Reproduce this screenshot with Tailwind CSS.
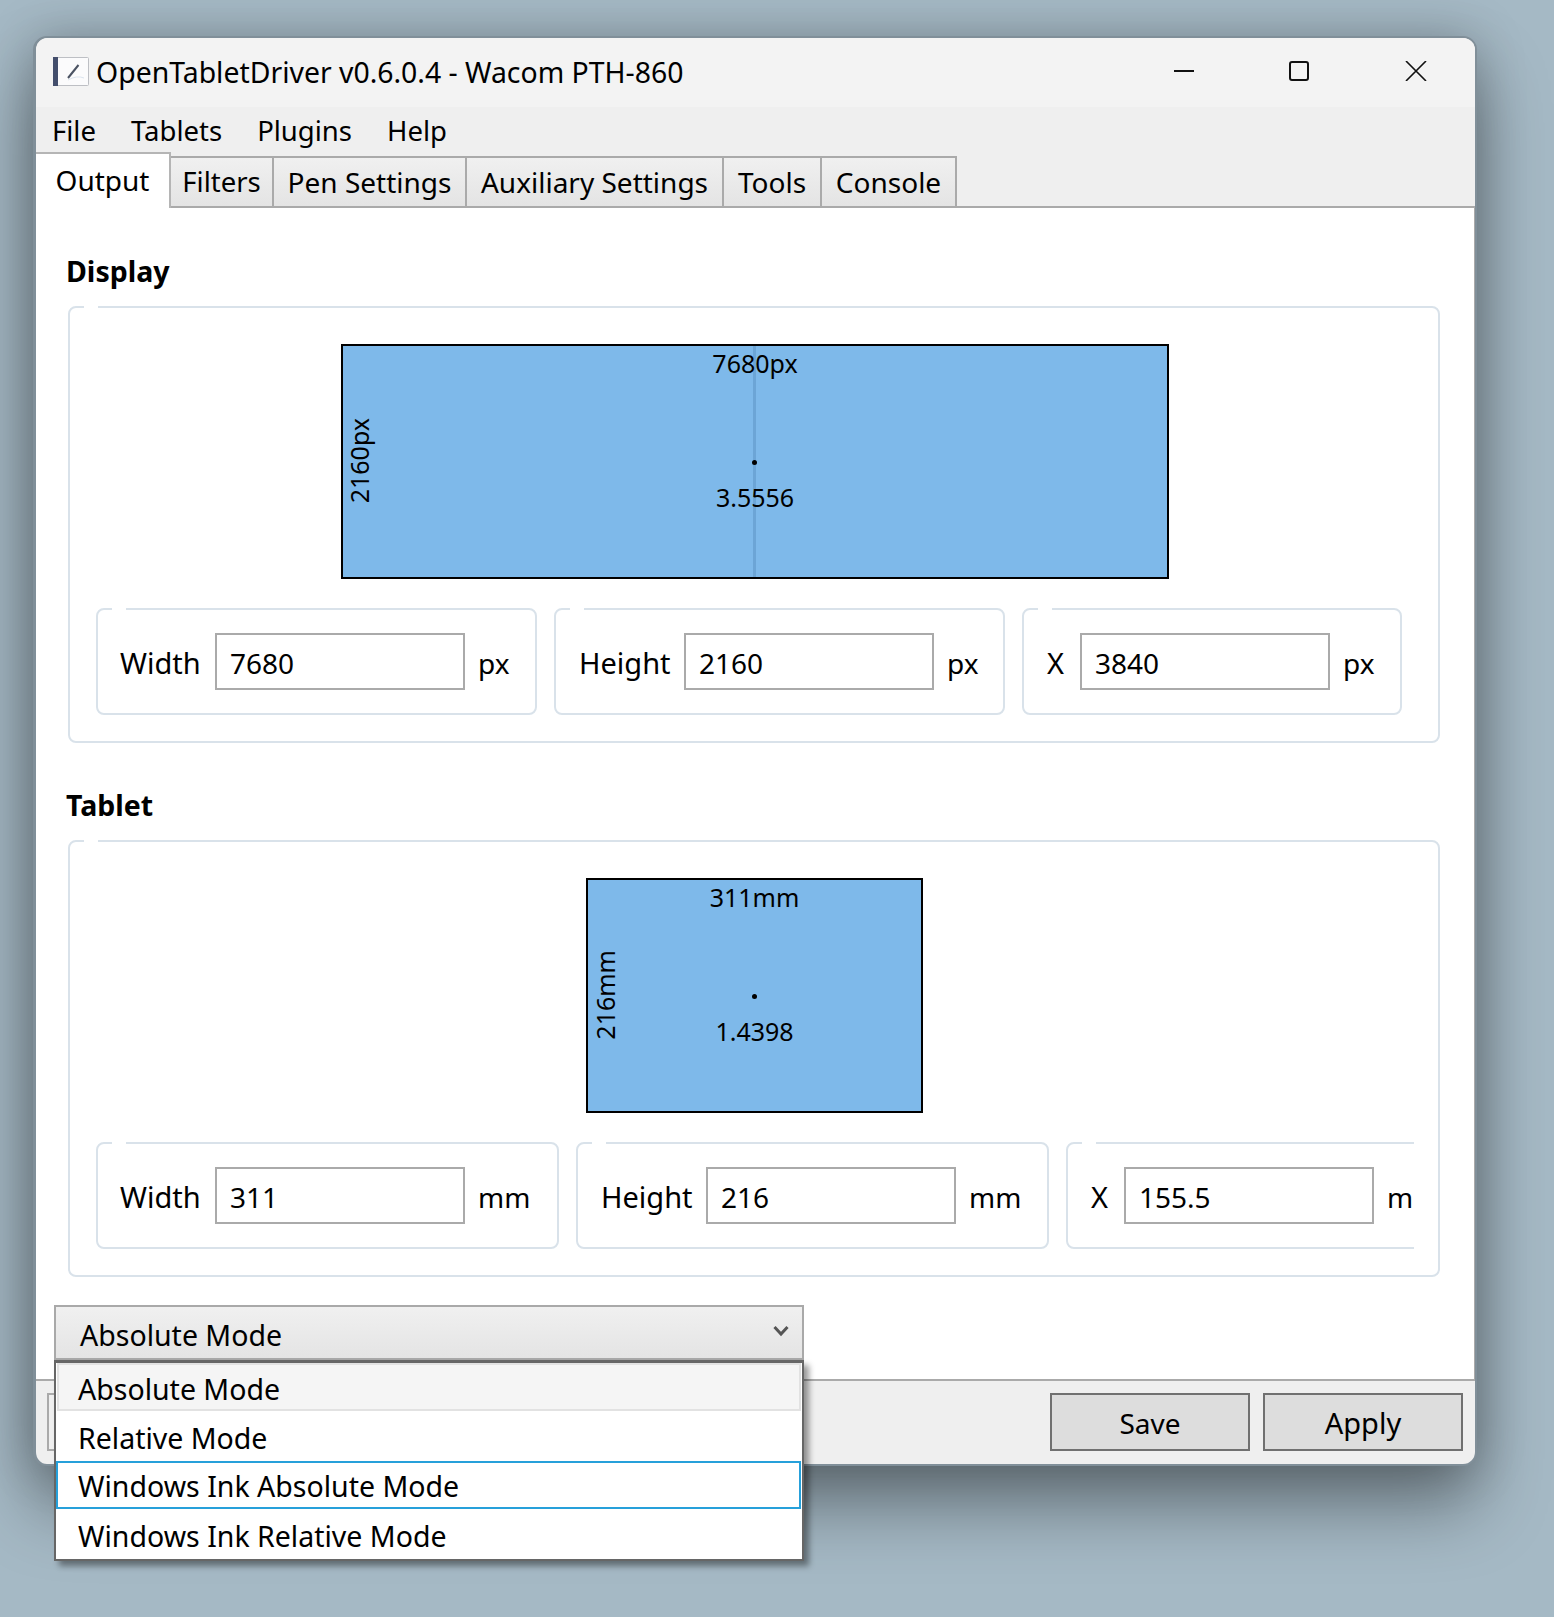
<!DOCTYPE html>
<html lang="en">
<head>
  <meta charset="UTF-8" />
  <title>OpenTabletDriver v0.6.0.4 - Wacom PTH-860</title>
  <script src="https://cdn.jsdelivr.net/npm/@tailwindcss/browser@4"></script>
</head>
<body class="w-[1554px] h-[1617px] overflow-hidden bg-[#a5b9c5] pt-[36px] pl-[33px] font-['Noto_Sans',sans-serif] text-[28px] text-black">
  <div class="w-[1444px] h-[1430px] flex flex-col border-2 border-l-[3px] border-[#808f99] rounded-[14px] bg-[#efefef] shadow-[0_0_50px_rgba(0,0,0,0.22),0_40px_70px_rgba(0,0,0,0.38)]">

    <!-- title bar -->
    <div class="h-[69px] shrink-0 flex items-center bg-[#f3f3f3] rounded-t-[12px] pl-[17px]">
      <svg class="w-[36px] h-[29px] mr-[7px] mb-[3px]" viewBox="0 0 36 29">
        <rect x="0.5" y="0.5" width="35" height="28" rx="1" fill="#fbfbfc" stroke="#bdbfc4" />
        <rect x="0" y="0" width="5" height="29" fill="#434e6c" />
        <path d="M15 21 L25.5 8" stroke="#4a5262" stroke-width="2" />
        <path d="M15 23 Q24 18 31 21" stroke="#dbe4ee" stroke-width="1" fill="none" />
      </svg>
      <span class="w-[1069px] text-[28.4px]">OpenTabletDriver v0.6.0.4 - Wacom PTH-860</span>
      <svg class="w-[20px] h-[20px] ml-[9px] mb-[3px]" viewBox="0 0 20 20"><path d="M0 10 H20" stroke="#111" stroke-width="2" /></svg>
      <svg class="w-[20px] h-[20px] ml-[95px] mb-[3px]" viewBox="0 0 20 20"><rect x="1" y="1" width="18" height="18" rx="2" fill="none" stroke="#111" stroke-width="2" /></svg>
      <svg class="w-[22px] h-[20px] ml-[96px] mb-[3px]" viewBox="0 0 22 20"><path d="M1 0 L21 20 M21 0 L1 20" stroke="#111" stroke-width="1.6" /></svg>
    </div>

    <!-- menu -->
    <div class="h-[45px] shrink-0 flex items-center gap-[35px] pl-[16px] pt-[2px] text-[27.5px] leading-[45px]">
      <span>File</span><span>Tablets</span><span>Plugins</span><span>Help</span>
    </div>

    <!-- tabs -->
    <div class="h-[56px] shrink-0 flex items-end border-b-2 border-[#aaaaaa]">
      <div class="relative z-10 w-[135px] h-[56px] -mb-[2px] flex items-center justify-center pb-[3px] bg-white border-t-2 border-r-2 border-[#b5b5b5]">Output</div>
      <div class="w-[103px] h-[50px] flex items-center justify-center bg-gradient-to-b from-[#f0f0f0] to-[#e4e4e4] border-t-2 border-r-2 border-[#aaaaaa] text-[27.5px]">Filters</div>
      <div class="w-[193px] h-[50px] flex items-center justify-center bg-gradient-to-b from-[#f0f0f0] to-[#e4e4e4] border-t-2 border-r-2 border-[#aaaaaa]">Pen Settings</div>
      <div class="w-[257px] h-[50px] flex items-center justify-center bg-gradient-to-b from-[#f0f0f0] to-[#e4e4e4] border-t-2 border-r-2 border-[#aaaaaa]">Auxiliary Settings</div>
      <div class="w-[98px] h-[50px] flex items-center justify-center bg-gradient-to-b from-[#f0f0f0] to-[#e4e4e4] border-t-2 border-r-2 border-[#aaaaaa]">Tools</div>
      <div class="w-[135px] h-[50px] flex items-center justify-center bg-gradient-to-b from-[#f0f0f0] to-[#e4e4e4] border-t-2 border-r-2 border-[#aaaaaa]">Console</div>
    </div>

    <!-- output tab -->
    <div class="flex-1 bg-white pt-[43px] border-r border-[#aaaaaa]">

      <section class="h-[534px]">
        <h2 class="h-[40px] mb-[15px] ml-[30px] text-[28.5px] leading-[40px] font-bold">Display</h2>
        <div class="relative w-[1372px] h-[437px] ml-[32px] pt-[36px] pl-[26px] border-2 border-[#d9e2ea] rounded-[8px]">
          <div class="absolute -top-[2px] left-[14px] w-[14px] h-[2px] bg-white"></div>
          <div class="relative w-[828px] h-[235px] ml-[245px] border-2 border-black bg-[#7eb9ea]">
            <div class="absolute left-[410px] top-0 bottom-0 w-[3px] bg-[#6ca5d6]"></div>
            <div class="absolute left-[409px] top-[114px] w-[5px] h-[5px] rounded-full bg-black"></div>
            <div class="absolute left-0 right-0 top-[0px] text-center text-[25px] leading-[34px]">7680px</div>
            <div class="absolute left-0 right-0 top-[134px] text-center text-[25px] leading-[34px]">3.5556</div>
            <div class="absolute -left-[1px] top-[72px] text-[25px] leading-[34px] [writing-mode:vertical-rl] rotate-180">2160px</div>
          </div>
          <div class="flex gap-[17px] mt-[29px] w-[1318px] overflow-hidden">
            <div class="relative shrink-0 w-[441px] h-[107px] flex items-center pl-[22px] border-2 border-[#d9e2ea] rounded-[8px]">
              <div class="absolute -top-[2px] left-[14px] w-[14px] h-[2px] bg-white"></div>
              <span class="w-[95px] pt-[3px] text-[29px]">Width</span>
              <div class="w-[250px] h-[57px] pl-[13px] pt-[3px] flex items-center border-2 border-[#aaaaaa]">7680</div>
              <span class="ml-[13px] pt-[3px]">px</span>
            </div>
            <div class="relative shrink-0 w-[451px] h-[107px] flex items-center pl-[23px] border-2 border-[#d9e2ea] rounded-[8px]">
              <div class="absolute -top-[2px] left-[14px] w-[14px] h-[2px] bg-white"></div>
              <span class="w-[105px] pt-[3px] text-[29px]">Height</span>
              <div class="w-[250px] h-[57px] pl-[13px] pt-[3px] flex items-center border-2 border-[#aaaaaa]">2160</div>
              <span class="ml-[13px] pt-[3px]">px</span>
            </div>
            <div class="relative shrink-0 w-[380px] h-[107px] flex items-center pl-[23px] border-2 border-[#d9e2ea] rounded-[8px]">
              <div class="absolute -top-[2px] left-[14px] w-[14px] h-[2px] bg-white"></div>
              <span class="w-[33px] pt-[3px] text-[29px]">X</span>
              <div class="w-[250px] h-[57px] pl-[13px] pt-[3px] flex items-center border-2 border-[#aaaaaa]">3840</div>
              <span class="ml-[13px] pt-[3px]">px</span>
            </div>
          </div>
        </div>
      </section>

      <section class="h-[534px]">
        <h2 class="h-[40px] mb-[15px] ml-[30px] text-[28.5px] leading-[40px] font-bold">Tablet</h2>
        <div class="relative w-[1372px] h-[437px] ml-[32px] pt-[36px] pl-[26px] border-2 border-[#d9e2ea] rounded-[8px]">
          <div class="absolute -top-[2px] left-[14px] w-[14px] h-[2px] bg-white"></div>
          <div class="relative w-[337px] h-[235px] ml-[490px] border-2 border-black bg-[#7eb9ea]">
            <div class="absolute left-[164px] top-[114px] w-[5px] h-[5px] rounded-full bg-black"></div>
            <div class="absolute left-0 right-0 top-[0px] text-center text-[25px] leading-[34px]">311mm</div>
            <div class="absolute left-0 right-0 top-[134px] text-center text-[25px] leading-[34px]">1.4398</div>
            <div class="absolute left-0 top-[70px] text-[25px] leading-[34px] [writing-mode:vertical-rl] rotate-180">216mm</div>
          </div>
          <div class="flex gap-[17px] mt-[29px] w-[1318px] overflow-hidden">
            <div class="relative shrink-0 w-[463px] h-[107px] flex items-center pl-[22px] border-2 border-[#d9e2ea] rounded-[8px]">
              <div class="absolute -top-[2px] left-[14px] w-[14px] h-[2px] bg-white"></div>
              <span class="w-[95px] pt-[3px] text-[29px]">Width</span>
              <div class="w-[250px] h-[57px] pl-[13px] pt-[3px] flex items-center border-2 border-[#aaaaaa]">311</div>
              <span class="ml-[13px] pt-[3px]">mm</span>
            </div>
            <div class="relative shrink-0 w-[473px] h-[107px] flex items-center pl-[23px] border-2 border-[#d9e2ea] rounded-[8px]">
              <div class="absolute -top-[2px] left-[14px] w-[14px] h-[2px] bg-white"></div>
              <span class="w-[105px] pt-[3px] text-[29px]">Height</span>
              <div class="w-[250px] h-[57px] pl-[13px] pt-[3px] flex items-center border-2 border-[#aaaaaa]">216</div>
              <span class="ml-[13px] pt-[3px]">mm</span>
            </div>
            <div class="relative shrink-0 w-[400px] h-[107px] flex items-center pl-[23px] border-2 border-[#d9e2ea] rounded-[8px]">
              <div class="absolute -top-[2px] left-[14px] w-[14px] h-[2px] bg-white"></div>
              <span class="w-[33px] pt-[3px] text-[29px]">X</span>
              <div class="w-[250px] h-[57px] pl-[13px] pt-[3px] flex items-center border-2 border-[#aaaaaa]">155.5</div>
              <span class="ml-[13px] pt-[3px]">mm</span>
            </div>
          </div>
        </div>
      </section>

      <!-- output mode dropdown, opened -->
      <div class="relative z-20 w-[750px] h-[55px] -mt-[14px] ml-[18px] text-[28.5px]">
        <div class="h-[55px] flex items-center justify-between pl-[24px] pr-[13px] pt-[5px] border-2 border-[#a9a9a9] bg-gradient-to-b from-[#f0f0f0] to-[#e4e4e4]">
          <span>Absolute Mode</span>
          <svg class="w-[16px] h-[12px] mb-[9px]" viewBox="0 0 16 12"><path d="M1.5 2 L8 9 L14.5 2" fill="none" stroke="#555" stroke-width="3" /></svg>
        </div>
        <div class="absolute left-0 top-[55px] w-[750px] h-[201px] border-2 border-t-[3px] border-[#666666] bg-white shadow-[5px_5px_6px_rgba(0,0,0,0.4)]">
          <div class="h-[48px] ml-[1px] mr-[1px] pl-[19px] pt-[4px] flex items-center bg-[#f5f5f5] border-2 border-[#e2e2e2]">Absolute Mode</div>
          <div class="h-[50px] pl-[22px] pt-[4px] flex items-center">Relative Mode</div>
          <div class="h-[48px] pl-[20px] pt-[3px] mr-[1px] flex items-center border-2 border-[#26a0da]">Windows Ink Absolute Mode</div>
          <div class="h-[50px] pl-[22px] pt-[4px] flex items-center">Windows Ink Relative Mode</div>
        </div>
      </div>
    </div>

    <!-- footer -->
    <div class="h-[85px] shrink-0 flex justify-between pt-[12px] pl-[11px] pr-[12px] border-t-2 border-[#aaaaaa] rounded-b-[12px]">
      <div class="w-[200px] h-[58px] border-2 border-[#aaaaaa]"></div>
      <div class="flex gap-[13px]">
        <div class="w-[200px] h-[58px] flex items-center justify-center pt-[2px] border-2 border-[#707070] bg-[#dddddd]">Save</div>
        <div class="w-[200px] h-[58px] flex items-center justify-center pt-[2px] border-2 border-[#707070] bg-[#dddddd] text-[29px]">Apply</div>
      </div>
    </div>
  </div>
</body>
</html>
